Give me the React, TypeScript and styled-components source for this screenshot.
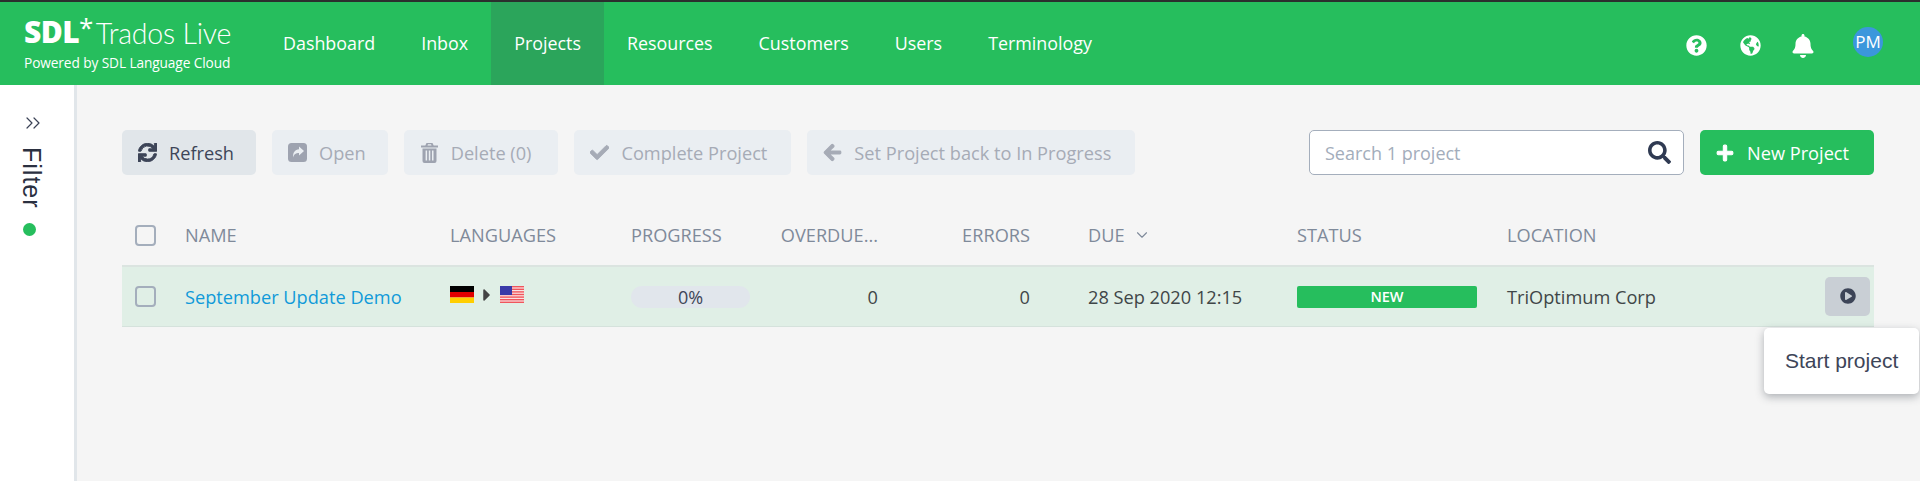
import React from "react";
import styled, { createGlobalStyle } from "styled-components";
import {
  FaSync, FaCheck, FaArrowLeft, FaSearch, FaPlus,
  FaQuestionCircle, FaGlobeAmericas, FaBell, FaPlayCircle, FaCaretRight,
} from "react-icons/fa";
import { FiChevronDown, FiChevronsRight } from "react-icons/fi";

const Global = createGlobalStyle`
  html, body { margin: 0; padding: 0; height: 100%; overflow: hidden; background: #f5f5f5; }
  #root { height: 100%; }
  * { box-sizing: border-box; }
  body { font-family: "Open Sans", "Liberation Sans", sans-serif; }
`;

const Page = styled.div`
  display: flex;
  flex-direction: column;
  height: 481px;
  border-top: 2px solid #2b2f2e;
`;
const Header = styled.header`
  display: flex;
  align-items: stretch;
  height: 83px;
  background: #26be5d;
  color: #fff;
`;
const Logo = styled.div`
  width: 260px;
  padding: 12px 0 0 24px;
  display: flex;
  flex-direction: column;
`;
const LogoTop = styled.div`
  display: flex;
  align-items: flex-start;
  height: 36px;
  white-space: nowrap;
`;
const LogoSdl = styled.span`
  font: 800 30px/36px "Open Sans", sans-serif;
  letter-spacing: -0.6px;
`;
const LogoStar = styled.span`
  font: 400 26px/26px "Open Sans", sans-serif;
  margin: 0 2.5px 0 0;
`;
const LogoName = styled.span`
  font: 300 28.5px/36px "Lato", sans-serif;
  letter-spacing: -0.2px;
  margin-top: 1px;
`;
const LogoSub = styled.div`
  font: 400 13.7px/18px "Open Sans", sans-serif;
  margin-top: 4px;
  white-space: nowrap;
  letter-spacing: -0.1px;
`;
const Nav = styled.nav`
  display: flex;
  align-items: stretch;
`;
const NavItem = styled.a<{ $active?: boolean }>`
  display: flex;
  align-items: center;
  padding: 0 23px 1px;
  font-size: 17.88px;
  font-weight: 500;
  background: ${(p) => (p.$active ? "#2ba55b" : "transparent")};
`;
const HeaderRight = styled.div`
  margin-left: auto;
  display: flex;
  align-items: center;
  padding: 4px 37px 0 0;
  gap: 33px;
  font-size: 21px;
  svg { display: block; }
`;
const BellIcon = styled(FaBell)`
  margin-left: -3px;
`;
const Avatar = styled.div`
  width: 30px;
  height: 30px;
  border-radius: 50%;
  background: #3b97dc;
  display: flex;
  align-items: center;
  justify-content: center;
  font-size: 17px;
  margin-left: 5px;
  margin-top: -8px;
`;
const Body = styled.div`
  flex: 1;
  display: flex;
  min-height: 0;
`;
const Sidebar = styled.aside`
  width: 77px;
  background: #fff;
  border-right: 3px solid #e1e6ea;
  display: flex;
  flex-direction: column;
  align-items: center;
  padding: 26px 15px 0 0;
  color: #3a4256;
`;
const ExpandIcon = styled(FiChevronsRight)`
  margin-left: 7px;
`;
const FilterLabel = styled.div`
  writing-mode: vertical-rl;
  font: 400 25px/26px "Liberation Sans", sans-serif;
  letter-spacing: 1px;
  margin: 12px 0 0 4px;
  color: #2b3040;
`;
const Dot = styled.div`
  width: 13px;
  height: 13px;
  border-radius: 50%;
  background: #26be5d;
  margin-top: 14px;
`;
const Content = styled.main`
  flex: 1;
  padding: 45px 46px 0 45px;
  position: relative;
`;
const Toolbar = styled.div`
  display: flex;
  gap: 16px;
  align-items: flex-start;
`;
const Button = styled.button<{ $off?: boolean; $endPad?: number }>`
  display: flex;
  align-items: center;
  gap: 12px;
  height: 45px;
  padding: 0 ${(p) => p.$endPad ?? 22}px 0 16px;
  border: none;
  border-radius: 5px;
  font: 400 18.2px "Open Sans", sans-serif;
  white-space: nowrap;
  background: ${(p) => (p.$off ? "#eaeef2" : "#e1e6ea")};
  color: ${(p) => (p.$off ? "#a6abb6" : "#3d4558")};
  svg { font-size: 19px; flex: none; stroke: currentColor; }
`;
const SearchBox = styled.div`
  margin-left: auto;
  width: 375px;
  height: 45px;
  display: flex;
  align-items: center;
  justify-content: space-between;
  padding: 0 12px 0 15px;
  border: 1px solid #a4aebc;
  border-radius: 5px;
  background: #fff;
  font-size: 18px;
  color: #a3adbb;
  svg { color: #2f3a52; font-size: 23px; }
`;
const PrimaryButton = styled.button`
  display: flex;
  align-items: center;
  gap: 13px;
  width: 174px;
  height: 45px;
  padding: 0 16px;
  border: none;
  border-radius: 5px;
  background: #26be5d;
  color: #fff;
  font: 400 18.2px "Open Sans", sans-serif;
  white-space: nowrap;
  svg { font-size: 18px; flex: none; stroke: currentColor; }
`;
const cols = "63px 265px 181px 149px 98px 152px 267px 210px 318px 1fr";
const HeadRow = styled.div`
  display: grid;
  grid-template-columns: ${cols};
  align-items: center;
  height: 90px;
  padding-top: 30px;
  font-size: 18.2px;
  color: #7f8a9a;
  white-space: nowrap;
`;
const Row = styled.div`
  display: grid;
  grid-template-columns: ${cols};
  align-items: center;
  height: 62px;
  background: #e0efe6;
  border-top: 2px solid #dbe4e0;
  border-bottom: 1px solid #d5e2dc;
  font-size: 18.2px;
  color: #3f4648;
  white-space: nowrap;
`;
const CheckCell = styled.div`
  padding-left: 13px;
`;
const Check = styled.span`
  display: block;
  width: 21px;
  height: 21px;
  border: 2px solid #a4aebc;
  border-radius: 4px;
`;
const Right = styled.div`
  text-align: right;
`;
const Due = styled.div`
  padding-left: 58px;
  display: flex;
  align-items: center;
  gap: 8px;
`;
const NameLink = styled.a`
  color: #109ad9;
`;
const Langs = styled.div`
  display: flex;
  align-items: center;
  margin-top: -4px;
  color: #444;
  svg { display: block; }
`;
const Caret = styled(FaCaretRight)`
  font-size: 20px;
  margin: 0 3px;
`;
const Progress = styled.div`
  width: 119px;
  height: 22px;
  border-radius: 11px;
  background: #e1e6ec;
  display: flex;
  align-items: center;
  justify-content: center;
  color: #3d4558;
  font-size: 18px;
`;
const Badge = styled.div`
  width: 180px;
  height: 22px;
  border-radius: 2px;
  background: #26be5d;
  color: #fff;
  display: flex;
  align-items: center;
  justify-content: center;
  font-size: 14.5px;
  font-weight: 600;
`;
const ActionCell = styled.div`
  display: flex;
  justify-content: flex-end;
  padding-right: 4px;
`;
const PlayButton = styled.div`
  width: 45px;
  height: 39px;
  border-radius: 5px;
  background: #c9cfd5;
  display: flex;
  align-items: center;
  justify-content: center;
  padding-bottom: 2px;
  color: #3d4558;
  font-size: 16px;
`;
const Menu = styled.div`
  position: absolute;
  top: 243px;
  right: 1px;
  width: 155px;
  height: 66px;
  padding-left: 21px;
  display: flex;
  align-items: center;
  background: #fff;
  border-radius: 5px;
  box-shadow: 0 3px 8px rgba(40, 50, 60, 0.35);
  font: 400 21px "Liberation Sans", sans-serif;
  color: #3d4558;
  white-space: nowrap;
`;

const German = () => (
  <svg width="24" height="17" viewBox="0 0 24 17">
    <rect width="24" height="6" fill="#000" />
    <rect y="6" width="24" height="5.5" fill="#e00000" />
    <rect y="11.5" width="24" height="5.5" fill="#ffce00" />
  </svg>
);
const American = () => (
  <svg width="24" height="17" viewBox="0 0 24 17">
    <rect width="24" height="17" fill="#fbe3e3" />
    {[0, 2.6, 5.2, 7.8, 10.4, 13, 15.6].map((y) => (
      <rect key={y} y={y} width="24" height="1.4" fill="#f0565c" />
    ))}
    <rect width="12" height="9" fill="#3a3aa8" />
  </svg>
);
const OpenIcon = () => (
  <svg width="19" height="19" viewBox="0 0 19 19" style={{ stroke: "none" }}>
    <rect width="19" height="19" rx="3.5" fill="#9ea3b0" />
    <path d="M11 3.5 16 8l-5 4.5V10c-3 0-5 1-5.8 4.4C4.6 9.5 7 6.6 11 6.2z" fill="#eaeef2" />
  </svg>
);
const TrashIcon = () => (
  <svg width="19" height="20" viewBox="0 0 17 20" style={{ stroke: "none" }}>
    <path
      fill="#9ea3b0"
      fillRule="evenodd"
      d="M5.5 0h6l1.2 2.6H17v2H0v-2h4.3zM7 1.3l-.5 1.3h4L10 1.3zM1.5 5.6h14V18a2 2 0 0 1-2 2h-10a2 2 0 0 1-2-2zM4.6 7.5v10h1.5v-10zM7.8 7.5v10h1.5v-10zM11 7.5v10h1.5v-10z"
    />
  </svg>
);

export default function App() {
  return (
    <Page>
      <Global />
      <Header>
        <Logo>
          <LogoTop>
            <LogoSdl>SDL</LogoSdl>
            <LogoStar>*</LogoStar>
            <LogoName>Trados Live</LogoName>
          </LogoTop>
          <LogoSub>Powered by SDL Language Cloud</LogoSub>
        </Logo>
        <Nav>
          <NavItem>Dashboard</NavItem>
          <NavItem>Inbox</NavItem>
          <NavItem $active>Projects</NavItem>
          <NavItem>Resources</NavItem>
          <NavItem>Customers</NavItem>
          <NavItem>Users</NavItem>
          <NavItem>Terminology</NavItem>
        </Nav>
        <HeaderRight>
          <FaQuestionCircle />
          <FaGlobeAmericas />
          <BellIcon size={24} />
          <Avatar>PM</Avatar>
        </HeaderRight>
      </Header>
      <Body>
        <Sidebar>
          <ExpandIcon size={24} strokeWidth={1.2} />
          <FilterLabel>Filter</FilterLabel>
          <Dot />
        </Sidebar>
        <Content>
          <Toolbar>
            <Button><FaSync strokeWidth={24} />Refresh</Button>
            <Button $off><OpenIcon />Open</Button>
            <Button $off $endPad={27}><TrashIcon />Delete (0)</Button>
            <Button $off $endPad={24}><FaCheck strokeWidth={24} />Complete Project</Button>
            <Button $off $endPad={24}><FaArrowLeft strokeWidth={30} />Set Project back to In Progress</Button>
            <SearchBox>Search 1 project<FaSearch /></SearchBox>
            <PrimaryButton><FaPlus strokeWidth={30} />New Project</PrimaryButton>
          </Toolbar>
          <HeadRow>
            <CheckCell><Check /></CheckCell>
            <div>NAME</div>
            <div>LANGUAGES</div>
            <div>PROGRESS</div>
            <Right>OVERDUE...</Right>
            <Right>ERRORS</Right>
            <Due>DUE <FiChevronDown size={18} strokeWidth={1.5} /></Due>
            <div>STATUS</div>
            <div>LOCATION</div>
          </HeadRow>
          <Row>
            <CheckCell><Check /></CheckCell>
            <NameLink>September Update Demo</NameLink>
            <Langs><German /><Caret /><American /></Langs>
            <Progress>0%</Progress>
            <Right>0</Right>
            <Right>0</Right>
            <Due>28 Sep 2020 12:15</Due>
            <Badge>NEW</Badge>
            <div>TriOptimum Corp</div>
            <ActionCell><PlayButton><FaPlayCircle /></PlayButton></ActionCell>
          </Row>
          <Menu>Start project</Menu>
        </Content>
      </Body>
    </Page>
  );
}
